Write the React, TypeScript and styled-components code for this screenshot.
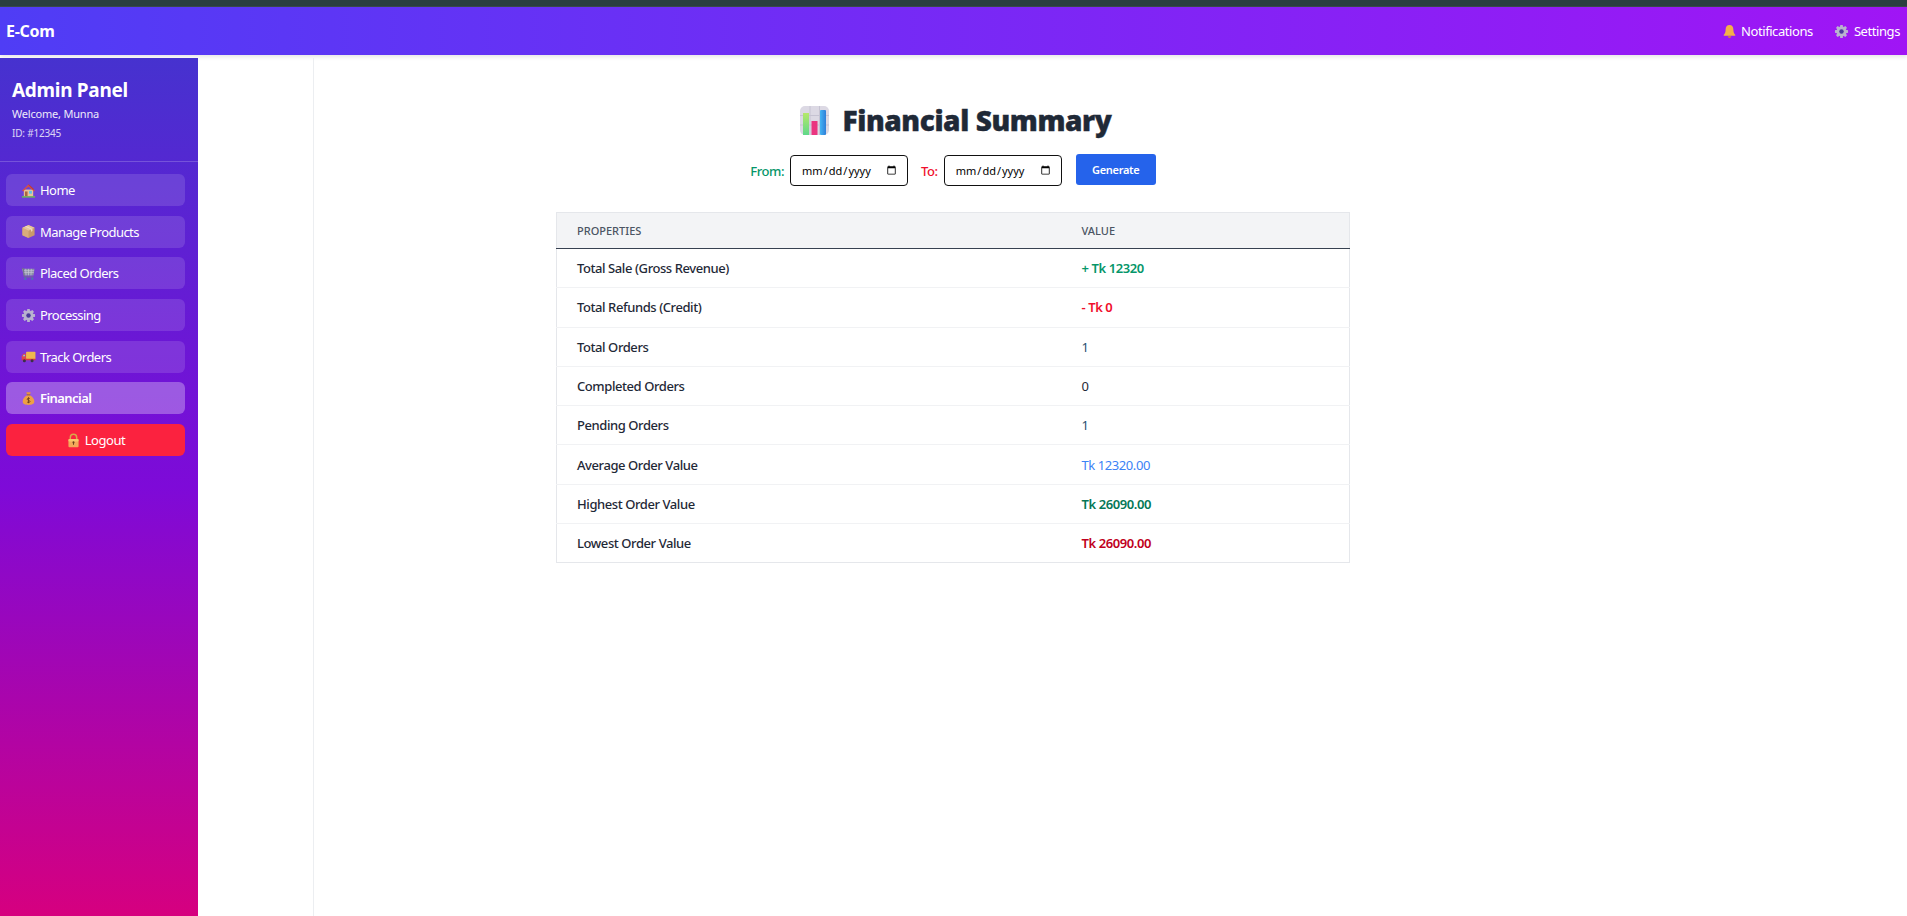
import React from 'react';
import styled, { createGlobalStyle } from 'styled-components';

const GlobalStyle = createGlobalStyle`
  html, body { margin: 0; padding: 0; background: #fff; }
  body {
    font-family: "Noto Sans", "Open Sans", sans-serif;
    letter-spacing: -0.42px;
    overflow: hidden;
  }
  * { box-sizing: border-box; }
`;

const Page = styled.div`
  height: 916px;
  display: flex;
  flex-direction: column;
  background: #fff;
`;

const TopStrip = styled.div`
  height: 7px;
  background: #2a3f3f;
  border-bottom: 1px solid #3a4a4a;
`;

const NavBar = styled.header`
  height: 48px;
  display: flex;
  align-items: center;
  justify-content: space-between;
  padding: 0 7px 0 6px;
  background: linear-gradient(90deg, #4f3df5 0%, #a015f5 100%);
  box-shadow: 0 2px 4px rgba(0, 0, 0, 0.1);
  color: #fff;
`;

const Brand = styled.div`
  font-size: 16px;
  font-weight: 700;
  letter-spacing: -0.3px;
`;

const NavLinks = styled.nav`
  display: flex;
  gap: 21px;
  font-size: 13px;
`;

const NavLink = styled.span`
  display: flex;
  align-items: center;
  gap: 5px;
`;

const Body = styled.div`
  flex: 1;
  display: flex;
  margin-top: 3px;
  min-height: 0;
`;

const Sidebar = styled.aside`
  width: 198px;
  background: linear-gradient(180deg, #4632cf 0%, #7e0ad8 50%, #d6007f 100%);
  color: #fff;
`;

const SideHeader = styled.div`
  height: 104px;
  padding: 20px 12px 0;
  border-bottom: 1px solid rgba(255, 255, 255, 0.2);
`;

const SideTitle = styled.div`
  font-size: 19px;
  font-weight: 700;
  line-height: 24px;
  letter-spacing: -0.3px;
`;

const SideLine = styled.div<{ $small?: boolean }>`
  font-size: ${(p) => (p.$small ? '10px' : '11px')};
  line-height: 14px;
  margin-top: ${(p) => (p.$small ? '5px' : '5px')};
  letter-spacing: -0.2px;
  opacity: ${(p) => (p.$small ? 0.8 : 0.9)};
`;

const SideMenu = styled.div`
  display: flex;
  flex-direction: column;
  gap: 9.7px;
  padding: 12px 13px 0 6px;
`;

const MenuItem = styled.div<{ $active?: boolean }>`
  height: 32px;
  display: flex;
  align-items: center;
  gap: 4px;
  padding-left: 15px;
  border-radius: 6px;
  font-size: 13px;
  letter-spacing: -0.55px;
  font-weight: ${(p) => (p.$active ? 600 : 400)};
  background: rgba(255, 255, 255, ${(p) => (p.$active ? 0.3 : 0.13)});
`;

const LogoutButton = styled.div`
  height: 32px;
  display: flex;
  align-items: center;
  justify-content: center;
  gap: 4px;
  border-radius: 6px;
  font-size: 13px;
  background: #fb223f;
`;

const Rail = styled.div`
  width: 116px;
  border-right: 1px solid #eceef1;
`;

const Content = styled.main`
  flex: 1;
  padding: 42px 315px 0 0;
  display: flex;
  flex-direction: column;
  align-items: center;
`;

const Title = styled.h1`
  margin: 0 0 0 5px;
  display: flex;
  align-items: center;
  gap: 14px;
  font-size: 28px;
  line-height: 40px;
  font-weight: 900;
  letter-spacing: -0.4px;
  color: #1f2937;
  -webkit-text-stroke: 0.4px #1f2937;
`;

const FilterRow = styled.div`
  margin-top: 14px;
  display: flex;
  align-items: center;
  font-size: 13px;
  font-weight: 500;
`;

const FilterLabel = styled.label<{ $color: string }>`
  color: ${(p) => p.$color};
  margin-right: 6px;
`;

const DateField = styled.input`
  width: 118px;
  height: 31px;
  border: 1px solid #111;
  border-radius: 4px;
  padding: 0 8px 0 10px;
  font-family: inherit;
  font-size: 11px;
  margin-right: 13px;
`;

const GenerateButton = styled.button`
  width: 80px;
  height: 31px;
  margin: 0 0 2px 1px;
  border: none;
  border-radius: 3px;
  background: #2563eb;
  color: #fff;
  font-family: inherit;
  font-size: 11px;
  font-weight: 600;
  letter-spacing: -0.3px;
`;

const Table = styled.table`
  width: 794px;
  margin-top: 25px;
  border-collapse: collapse;
  border: 1px solid #e5e7eb;
  font-size: 13px;
`;

const HeadCell = styled.th`
  height: 36px;
  padding: 0 20px;
  text-align: left;
  font-size: 11px;
  font-weight: 500;
  letter-spacing: 0;
  color: #4b5563;
  background: #f3f4f6;
  border-bottom: 1px solid #374151;
`;

const Row = styled.tr`
  height: 39.3px;
  border-bottom: 1px solid #f1f2f4;

  &:last-child {
    border-bottom: 1px solid #e5e7eb;
  }
`;

const LabelCell = styled.td`
  padding: 0 20px;
  width: 505px;
  font-weight: 500;
  color: #1f2937;
`;

const ValueCell = styled.td<{ $color: string; $weight: number }>`
  padding: 0 20px;
  color: ${(p) => p.$color};
  font-weight: ${(p) => p.$weight};
`;

const Home = () => (
  <svg width="15" height="15" viewBox="0 0 16 16">
    <rect x="3" y="7" width="10" height="7.5" fill="#e8c39a" />
    <path d="M1.2 8 8 1.6 14.8 8l-1 1L8 3.8 2.2 9z" fill="#d9503f" />
    <path d="M8 2.2 13.5 7.4V6L8 1z" fill="#b83a33" />
    <rect x="8.6" y="8.4" width="3" height="3" fill="#5cc4e8" />
    <rect x="4.2" y="9" width="2.8" height="5.500" fill="#a8683c" />
    <rect x="1" y="14" width="14" height="1.6" fill="#6cb85a" />
  </svg>
);

const Box = () => (
  <svg width="15" height="15" viewBox="0 0 16 16">
    <path d="M8 1 14.5 4v8L8 15 1.5 12V4z" fill="#c99a68" />
    <path d="M8 7.2V15L1.5 12V4z" fill="#d9ac7c" />
    <path d="M8 1 14.5 4 8 7.2 1.5 4z" fill="#e6c49c" />
    <path d="M4.2 2.7 10.8 5.8v2.4l1.4-.7V5.2L5.7 2z" fill="#f0dcc0" />
  </svg>
);

const Cart = () => (
  <svg width="15" height="15" viewBox="0 0 16 16">
    <path d="M1 3h13.4l-1 7H3z" fill="#8d8fa8" />
    <path d="M2 5h12M2.4 7h11.2M5 3l.4 7M8 3v7M11 3l-.4 7" stroke="#c9cad8" strokeWidth="0.7" />
    <path d="M1 2.6h1.4l1 9h9.8" stroke="#6f7188" strokeWidth="1" fill="none" />
    <circle cx="4.6" cy="13.6" r="1.3" fill="#4f74b0" />
    <circle cx="12" cy="13.6" r="1.3" fill="#4f74b0" />
  </svg>
);

const Gear = ({ size = 15 }: { size?: number }) => (
  <svg width={size} height={size} viewBox="0 0 16 16">
    <g fill="#b9b3cf">
      <circle cx="8" cy="8" r="5.4" />
      {[0, 45, 90, 135, 180, 225, 270, 315].map((a) => (
        <rect key={a} x="6.5" y="1" width="3" height="3.4" rx="0.6" transform={`rotate(${a} 8 8)`} />
      ))}
    </g>
    <circle cx="8" cy="8" r="2.4" fill="#4a3a9c" />
  </svg>
);

const Truck = () => (
  <svg width="15" height="15" viewBox="0 0 16 16">
    <rect x="5.4" y="3" width="10" height="8" rx="0.8" fill="#eeb84c" />
    <path d="M0.8 7.6 2.4 5h2.8v6H0.8z" fill="#e04848" />
    <rect x="0.8" y="10.4" width="14.6" height="1.6" fill="#d9393f" />
    <path d="M1.8 7.6 2.9 6h1.3v1.6z" fill="#7fd0ee" />
    <circle cx="3.6" cy="12.4" r="1.6" fill="#3c3046" />
    <circle cx="11.8" cy="12.4" r="1.6" fill="#3c3046" />
  </svg>
);

const MoneyBag = () => (
  <svg width="15" height="15" viewBox="0 0 16 16">
    <path d="M5.6 1.2h4.8L9.4 4H6.6z" fill="#e8963c" />
    <rect x="6" y="3.6" width="4" height="1.2" rx="0.5" fill="#8a5426" />
    <path d="M6 4.8h4c2.6 1.6 4.2 4 4.2 6.4 0 2.6-2.4 3.6-6.2 3.6s-6.2-1-6.2-3.6C1.8 8.8 3.4 6.4 6 4.8z" fill="#eea043" />
    <path d="M8 6.6v6.4M9.6 8.2C9 7.6 6.6 7.4 6.6 8.8S9.6 9.8 9.6 11.2 7 12.4 6.4 11.6" stroke="#6a3f1c" strokeWidth="0.9" fill="none" />
  </svg>
);

const Lock = () => (
  <svg width="15" height="15" viewBox="0 0 16 16">
    <path d="M4.6 7V4.8a3.4 3.4 0 0 1 6.8 0V7" stroke="#d9a84a" strokeWidth="1.6" fill="none" />
    <rect x="2.6" y="6.4" width="10.8" height="8.8" rx="1" fill="#f4a85a" />
    <rect x="2.6" y="6.4" width="10.8" height="2.6" rx="1" fill="#f8c66c" />
    <circle cx="8" cy="10" r="1.1" fill="#6a3f1c" />
    <rect x="7.5" y="10" width="1" height="2.6" fill="#6a3f1c" />
  </svg>
);

const Bell = () => (
  <svg width="13" height="15" viewBox="1 0 14 16">
    <path d="M8 1c2.8 0 4.2 2.2 4.2 5 0 2.6.8 4.2 2 5.6v1H1.800v-1c1.200-1.400 2-3 2-5.600C3.800 3.200 5.200 1 8 1z" fill="#f4b048" />
    <path d="M6.200 13.200h3.600a1.800 1.800 0 0 1-3.600 0z" fill="#d98a30" />
  </svg>
);

const ChartIcon = () => (
  <svg width="29" height="29" viewBox="0 0 29 29">
    <defs>
      <linearGradient id="greenBar" x1="0" y1="0" x2="0" y2="1">
        <stop offset="0" stopColor="#b6e86a" />
        <stop offset="1" stopColor="#5fd88a" />
      </linearGradient>
      <linearGradient id="blueBar" x1="0" y1="0" x2="1" y2="0">
        <stop offset="0" stopColor="#44b4f4" />
        <stop offset="1" stopColor="#2f7fd8" />
      </linearGradient>
    </defs>
    <rect width="29" height="29" rx="5" fill="#dcd9e4" />
    <path d="M0 9.500h29M0 19h29M10 0v29M19.500 0v29" stroke="#c6c3d2" strokeWidth="1" />
    <rect x="3" y="7" width="6" height="22" fill="url(#greenBar)" />
    <rect x="11.500" y="15" width="6" height="14" fill="#ea3580" />
    <rect x="20" y="4" width="6" height="25" rx="1" fill="url(#blueBar)" />
  </svg>
);

const rows = [
  { label: 'Total Sale (Gross Revenue)', value: '+ Tk 12320', color: '#059669', weight: 600 },
  { label: 'Total Refunds (Credit)', value: '- Tk 0', color: '#f00f2c', weight: 600 },
  { label: 'Total Orders', value: '1', color: '#1f4f6f', weight: 400 },
  { label: 'Completed Orders', value: '0', color: '#1f2937', weight: 400 },
  { label: 'Pending Orders', value: '1', color: '#1f4f6f', weight: 400 },
  { label: 'Average Order Value', value: 'Tk 12320.00', color: '#3b82f6', weight: 400 },
  { label: 'Highest Order Value', value: 'Tk 26090.00', color: '#047857', weight: 600 },
  { label: 'Lowest Order Value', value: 'Tk 26090.00', color: '#c00020', weight: 600 },
];

const menu = [
  { label: 'Home', icon: <Home /> },
  { label: 'Manage Products', icon: <Box /> },
  { label: 'Placed Orders', icon: <Cart /> },
  { label: 'Processing', icon: <Gear /> },
  { label: 'Track Orders', icon: <Truck /> },
  { label: 'Financial', icon: <MoneyBag />, active: true },
];

export default function App() {
  return (
    <Page>
      <GlobalStyle />
      <TopStrip />
      <NavBar>
        <Brand>E-Com</Brand>
        <NavLinks>
          <NavLink><Bell /> Notifications</NavLink>
          <NavLink><Gear /> Settings</NavLink>
        </NavLinks>
      </NavBar>
      <Body>
        <Sidebar>
          <SideHeader>
            <SideTitle>Admin Panel</SideTitle>
            <SideLine>Welcome, Munna</SideLine>
            <SideLine $small>ID: #12345</SideLine>
          </SideHeader>
          <SideMenu>
            {menu.map((m) => (
              <MenuItem key={m.label} $active={m.active}>{m.icon}{m.label}</MenuItem>
            ))}
            <LogoutButton><Lock /> Logout</LogoutButton>
          </SideMenu>
        </Sidebar>
        <Rail />
        <Content>
          <Title><ChartIcon /> Financial Summary</Title>
          <FilterRow>
            <FilterLabel $color="#059669">From:</FilterLabel>
            <DateField type="date" />
            <FilterLabel $color="#f00f2c">To:</FilterLabel>
            <DateField type="date" />
            <GenerateButton>Generate</GenerateButton>
          </FilterRow>
          <Table>
            <thead>
              <tr>
                <HeadCell>PROPERTIES</HeadCell>
                <HeadCell>VALUE</HeadCell>
              </tr>
            </thead>
            <tbody>
              {rows.map((r) => (
                <Row key={r.label}>
                  <LabelCell>{r.label}</LabelCell>
                  <ValueCell $color={r.color} $weight={r.weight}>{r.value}</ValueCell>
                </Row>
              ))}
            </tbody>
          </Table>
        </Content>
      </Body>
    </Page>
  );
}
